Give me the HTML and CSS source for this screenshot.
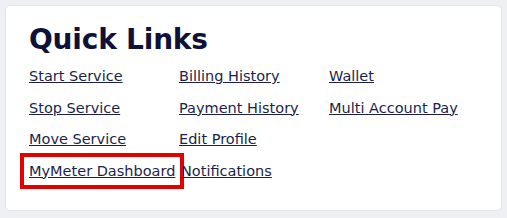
FILE: index.html
```html
<!DOCTYPE html>
<html lang="en">
<head>
  <meta charset="UTF-8">
  <meta name="viewport" content="width=device-width, initial-scale=1.0">
  <title>Quick Links</title>
  <link rel="stylesheet" href="styles.css">
</head>
<body>

  <div class="card">
    <h2>Quick Links</h2>
    <div class="links">
      <a href="#">Start Service</a>
      <a href="#">Billing History</a>
      <a href="#">Wallet</a>
      <a href="#">Stop Service</a>
      <a href="#">Payment History</a>
      <a href="#">Multi Account Pay</a>
      <a href="#">Move Service</a>
      <a href="#">Edit Profile</a>
      <span></span>
      <a href="#" class="marked">MyMeter Dashboard</a>
      <a href="#" class="after-marked">Notifications</a>
    </div>
  </div>

</body>
</html>
```

FILE: styles.css
```css
body {
  margin: 0;
  padding: 5px 5px 5px 5px;
  background-color: #eef0f4;
  font-family: "DejaVu Sans", sans-serif;
}
.card {
  background-color: #fff;
  border: 1px solid #e3e5ea;
  border-radius: 5px;
  height: 206px;
  box-sizing: border-box;
  width: 497px;
  padding: 16px 23px 0 23px;
}
.card h2 {
  margin: 0 0 9px 0;
  font-size: 28px;
  line-height: 36px;
  font-weight: bold;
  color: #0e1236;
  letter-spacing: -0.2px;
}
.links {
  display: grid;
  grid-template-columns: 150px 150px 150px;
  row-gap: 13.5px;
}
.links a {
  color: #1b1f4a;
  font-size: 14.5px;
  line-height: 18px;
  white-space: nowrap;
}
.marked {
  outline: 4px solid #e20000;
  outline-offset: 5px;
  justify-self: start;
}
.after-marked {
  margin-left: 2px;
}
```
